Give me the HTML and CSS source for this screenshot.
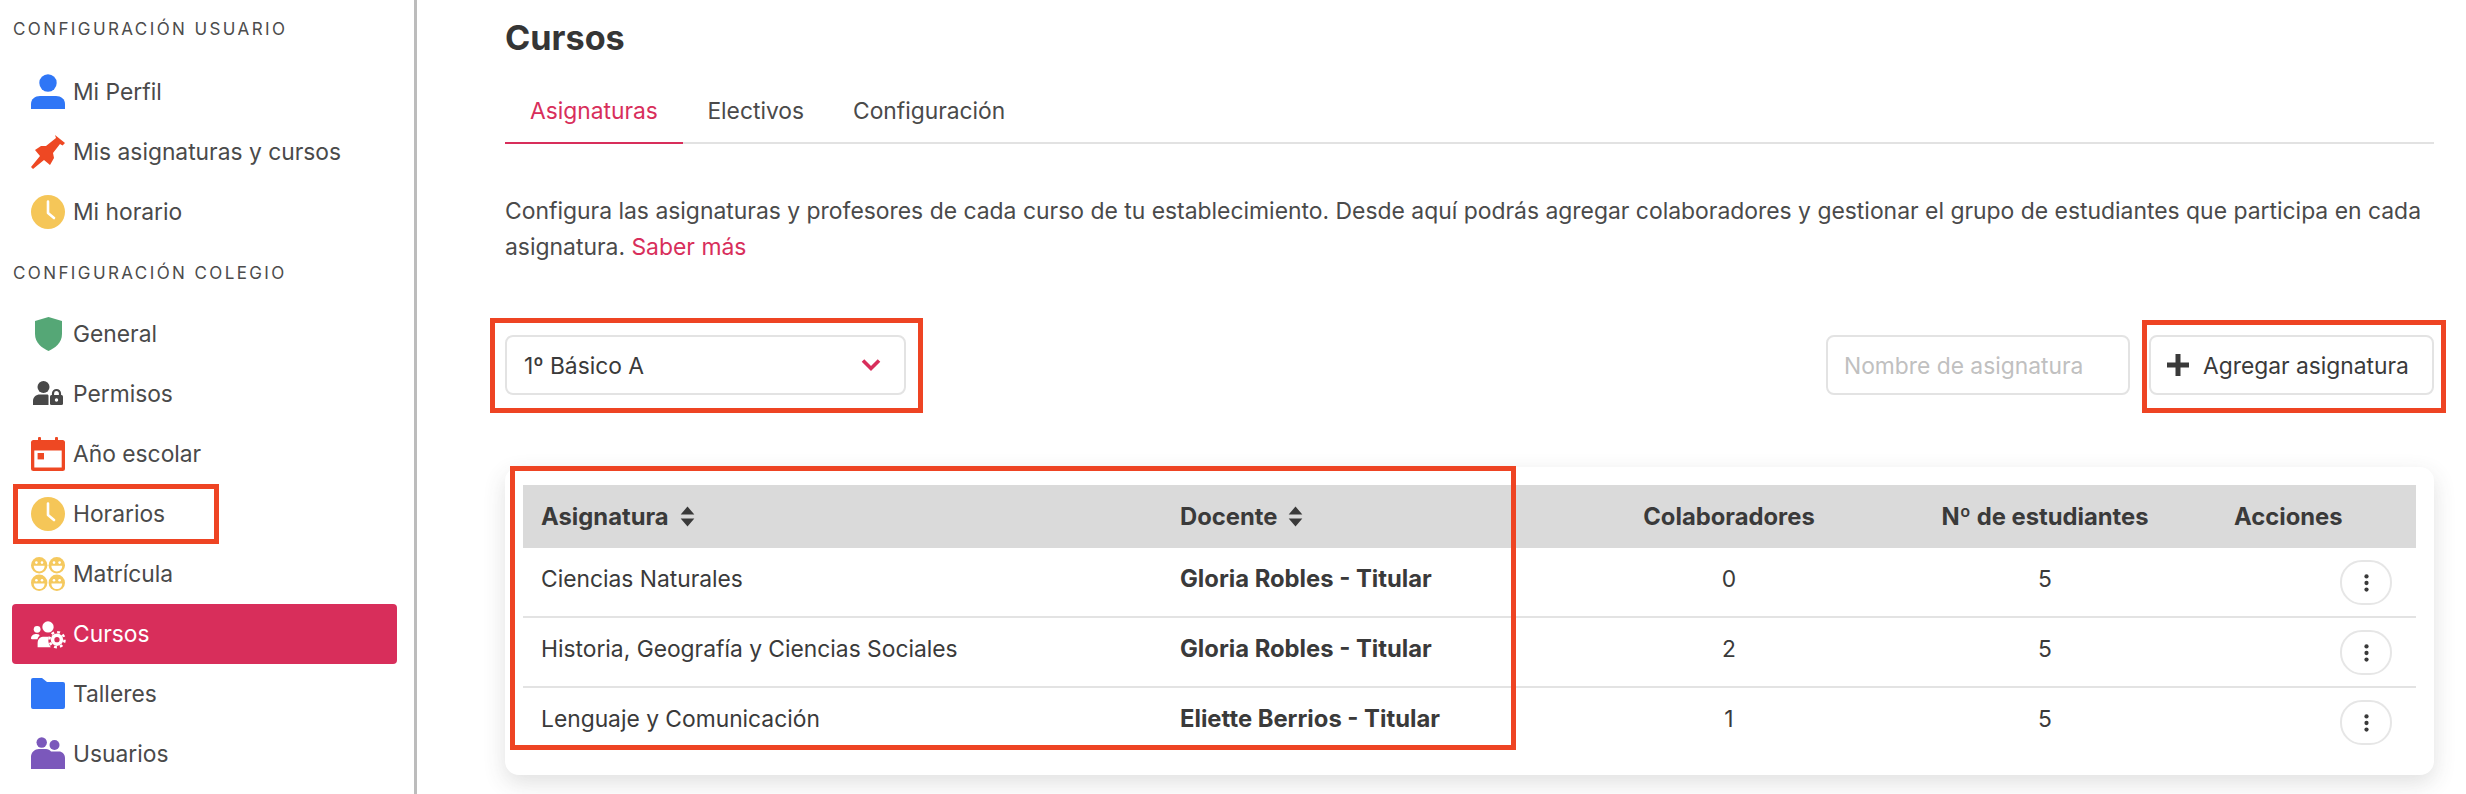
FILE: index.html
```html
<!DOCTYPE html>
<html lang="es">
<head>
<meta charset="utf-8">
<title>Cursos</title>
<link rel="stylesheet" href="styles.css">
</head>
<body>
<div class="app">
  <aside class="sidebar">
    <div class="nav-label nav-label-first">CONFIGURACIÓN USUARIO</div>
    <a class="nav-item"><svg class="nav-icon" viewBox="0 0 34 34"><circle cx="17" cy="8" r="8.7" fill="#2f76f6"/><path d="M0 34V29C0 24 4 21 9 21H25C30 21 34 24 34 29V34Z" fill="#2f76f6"/></svg><span>Mi Perfil</span></a>
    <a class="nav-item"><svg class="nav-icon" viewBox="0 0 34 34"><path d="M24 0L34 8L31.5 10.5L29 9L22 18L23 23L19 30L13 25L2 34L0 32L9 21L4 15L10 11L15 11L25 3Z" fill="#ee4823"/></svg><span>Mis asignaturas y cursos</span></a>
    <a class="nav-item"><svg class="nav-icon" viewBox="0 0 34 34"><circle cx="17" cy="17" r="17" fill="#f5c658"/><path d="M17 6.5V18L23 23" fill="none" stroke="#fff" stroke-width="2.6" stroke-linecap="round" stroke-linejoin="round"/></svg><span>Mi horario</span></a>
    <div class="nav-label">CONFIGURACIÓN COLEGIO</div>
    <a class="nav-item"><svg class="nav-icon" viewBox="0 0 34 34"><path d="M17.5 0L31 4V17C31 26 24 31 17.5 34C11 31 4 26 4 17V4Z" fill="#55a776"/></svg><span>General</span></a>
    <a class="nav-item"><svg class="nav-icon" viewBox="0 0 34 34"><circle cx="12.5" cy="10" r="6" fill="#484848"/><path d="M2 28V24C2 20 5 17.5 9 17.5H16C17 17.5 17.500 18 17.500 19V28Z" fill="#484848"/><path d="M22 18.500V16.500A3.500 3.500 0 0 1 29 16.500V18.500" fill="none" stroke="#484848" stroke-width="2.200"/><rect x="19" y="18" width="13" height="10" rx="1.500" fill="#484848"/><circle cx="25.500" cy="23" r="1.700" fill="#fff"/></svg><span>Permisos</span></a>
    <a class="nav-item"><svg class="nav-icon" viewBox="0 0 34 34"><rect y="3" width="34" height="31" rx="2.500" fill="#ee4823"/><rect x="7" width="3" height="6" rx="1" fill="#ee4823"/><rect x="24" width="3" height="6" rx="1" fill="#ee4823"/><rect x="3.300" y="13.500" width="27.400" height="17" fill="#fff"/><rect x="6.600" y="16" width="6.400" height="6.400" fill="#ee4823"/></svg><span>Año escolar</span></a>
    <a class="nav-item"><svg class="nav-icon" viewBox="0 0 34 34"><circle cx="17" cy="17" r="17" fill="#f5c658"/><path d="M17 6.500V18L23 23" fill="none" stroke="#fff" stroke-width="2.600" stroke-linecap="round" stroke-linejoin="round"/></svg><span>Horarios</span></a>
    <a class="nav-item"><svg class="nav-icon" viewBox="0 0 34 34"><defs><g id="smile"><circle cx="8.200" cy="8.200" r="8.200" fill="#f5c95e"/><circle cx="5.400" cy="5.600" r="1.300" fill="#fff"/><circle cx="11" cy="5.600" r="1.300" fill="#fff"/><path d="M2.800 8.800H13.600C13.600 12.200 11.400 14.400 8.200 14.400C5 14.400 2.800 12.200 2.800 8.800Z" fill="#fff"/></g></defs><use href="#smile"/><use href="#smile" x="17.600"/><use href="#smile" y="17.600"/><use href="#smile" x="17.600" y="17.600"/></svg><span>Matrícula</span></a>
    <a class="nav-item nav-item-active"><svg class="nav-icon nav-icon-wide" viewBox="-1 0 36 34"><circle cx="17" cy="9.500" r="6" fill="#fff"/><circle cx="5.500" cy="12" r="3.600" fill="#fff"/><path d="M-1 22C-1 18.500 2 17 5 17C7 17 8.500 18 8 19C6.500 20 6 21.500 6 22.500H0Z" fill="#fff"/><path d="M6 31V27C6 22 9 20 13 20H18C17 23 17 27 20 31Z" fill="#fff"/><circle cx="26.500" cy="23" r="6.600" fill="#fff"/><circle cx="26.500" cy="23" r="8" fill="none" stroke="#fff" stroke-width="2.600" stroke-dasharray="3 3.280"/><circle cx="26.500" cy="23" r="2.800" fill="#d82e5b"/></svg><span>Cursos</span></a>
    <a class="nav-item"><svg class="nav-icon" viewBox="0 0 34 34"><path d="M2 1H11L16 5H32A2 2 0 0 1 34 7V30A2 2 0 0 1 32 32H2A2 2 0 0 1 0 30V3A2 2 0 0 1 2 1Z" fill="#2f76f6"/></svg><span>Talleres</span></a>
    <a class="nav-item"><svg class="nav-icon" viewBox="0 0 34 34"><circle cx="10.700" cy="5.500" r="5.200" fill="#7b58bb"/><circle cx="23.500" cy="8" r="5" fill="#7b58bb"/><path d="M0 32V20C0 15 4 12 8 12H15C17 12 19 13 20 14.500H28C31 14.500 34 17 34 21V32Z" fill="#7b58bb"/></svg><span>Usuarios</span></a>
  </aside>

  <main class="content">
    <h1 class="title">Cursos</h1>
    <nav class="tabs">
      <a class="tab tab-active">Asignaturas</a>
      <a class="tab">Electivos</a>
      <a class="tab">Configuración</a>
    </nav>
    <p class="intro">Configura las asignaturas y profesores de cada curso de tu establecimiento. Desde aquí podrás agregar colaboradores y gestionar el grupo de estudiantes que participa en cada asignatura. <a class="link">Saber más</a></p>

    <div class="toolbar">
      <div class="select">
        <span>1º Básico A</span>
        <svg class="chevron" viewBox="0 0 20 14"><path d="M2 2.500L10 10.500L18 2.500" fill="none" stroke="#d82e5b" stroke-width="3.600"/></svg>
      </div>
      <div class="toolbar-right">
        <div class="input">Nombre de asignatura</div>
        <button class="add-button"><svg class="plus" viewBox="0 0 22 22"><path d="M11 0V22M0 11H22" stroke="#3a3a3a" stroke-width="5" fill="none"/></svg><span>Agregar asignatura</span></button>
      </div>
    </div>

    <section class="card">
      <div class="grid-row head-row">
        <div class="cell-sort">Asignatura <svg class="sort" viewBox="0 0 14 20"><path d="M7 0.500L13.500 8H0.500ZM7 19.500L13.500 12H0.500Z" fill="#3a3a3a"/></svg></div>
        <div class="cell-sort">Docente <svg class="sort" viewBox="0 0 14 20"><path d="M7 0.500L13.500 8H0.500ZM7 19.500L13.500 12H0.500Z" fill="#3a3a3a"/></svg></div>
        <div class="center">Colaboradores</div>
        <div class="center">Nº de estudiantes</div>
        <div class="head-actions">Acciones</div>
      </div>
      <div class="grid-row body-row">
        <div>Ciencias Naturales</div>
        <div class="strong">Gloria Robles - Titular</div>
        <div class="center">0</div>
        <div class="center">5</div>
        <div class="actions"><button class="more"><svg class="dots" viewBox="0 0 6 22"><circle cx="3" cy="3" r="2.600"/><circle cx="3" cy="11" r="2.600"/><circle cx="3" cy="19" r="2.600"/></svg></button></div>
      </div>
      <div class="grid-row body-row">
        <div>Historia, Geografía y Ciencias Sociales</div>
        <div class="strong">Gloria Robles - Titular</div>
        <div class="center">2</div>
        <div class="center">5</div>
        <div class="actions"><button class="more"><svg class="dots" viewBox="0 0 6 22"><circle cx="3" cy="3" r="2.600"/><circle cx="3" cy="11" r="2.600"/><circle cx="3" cy="19" r="2.600"/></svg></button></div>
      </div>
      <div class="grid-row body-row">
        <div>Lenguaje y Comunicación</div>
        <div class="strong">Eliette Berrios - Titular</div>
        <div class="center">1</div>
        <div class="center">5</div>
        <div class="actions"><button class="more"><svg class="dots" viewBox="0 0 6 22"><circle cx="3" cy="3" r="2.600"/><circle cx="3" cy="11" r="2.600"/><circle cx="3" cy="19" r="2.600"/></svg></button></div>
      </div>
    </section>
  </main>
</div>
<div class="mark mark-horarios"></div>
<div class="mark mark-select"></div>
<div class="mark mark-add"></div>
<div class="mark mark-table"></div>
</body>
</html>
```
FILE: styles.css
```css
* { box-sizing: border-box; }
html, body { margin: 0; height: 794px; overflow: hidden; background: #fff; }
body { font-family: Inter, "Liberation Sans", sans-serif; font-size: 22.8px; color: #4a4a4a; position: relative; }
.app { display: flex; height: 794px; }

.sidebar { width: 417px; flex: none; border-right: 3px solid #bcbcbc; padding: 0 17px 0 12px; }
.nav-label { font-size: 17px; line-height: 20px; letter-spacing: 2.4px; color: #4c4c4c; padding: 21px 0 21px 1px; }
.nav-label-first { padding: 19px 0 23px 1px; }
.nav-item { display: flex; align-items: center; height: 60px; padding-left: 19px; gap: 8px; border-radius: 4px; }
.nav-item span { margin-bottom: 2px; }
.nav-item-active { background: #d82e5b; color: #fff; }
.nav-icon { width: 34px; height: 34px; flex: none; overflow: visible; }

.content { flex: 1; min-width: 0; padding: 0 32px 0 88px; }
.title { margin: 18px 0 0; font-size: 34.2px; line-height: 40px; font-weight: 700; color: #353535; }
.tabs { display: flex; margin-top: 24px; border-bottom: 2px solid #e2e2e2; height: 62px; }
.tab { padding: 0 24.500px; height: 62px; line-height: 58px; }
.tab-active { color: #d82e5b; border-bottom: 2px solid #d82e5b; padding: 0 25px; }
.intro { margin: 49px 0 0; line-height: 36px; font-size: 22.9px; }
.link { color: #d82e5b; }

.toolbar { display: flex; justify-content: space-between; margin-top: 70px; }
.select { width: 401px; height: 60px; border: 2px solid #e3e3e3; border-radius: 8px; display: flex; align-items: center; justify-content: space-between; padding: 0 23px 0 17px; color: #3a3a3a; }
.chevron { width: 20px; height: 14px; }
.toolbar-right { display: flex; gap: 19px; }
.input { width: 304px; height: 60px; border: 2px solid #e3e3e3; border-radius: 8px; display: flex; align-items: center; padding-left: 16px; color: #c0c0c0; }
.add-button { width: 285px; height: 60px; background: #fff; border: 2px solid #e3e3e3; border-radius: 8px; display: flex; align-items: center; padding: 0 0 0 16px; gap: 14px; font: inherit; color: #3a3a3a; }
.plus { width: 22px; height: 22px; }

.card { margin-top: 72px; height: 308px; padding: 18px 18px 0; border-radius: 14px; background: #fff; box-shadow: 0 8px 22px rgba(60, 60, 60, .16); }
.grid-row { display: grid; grid-template-columns: 639px 400px 334px 298px 222px; }
.head-row { height: 63px; background: #dadada; align-items: center; font-weight: 700; font-size: 23.8px; color: #3a3a3a; }
.head-row > div:first-child, .head-row > div:nth-child(2) { padding-left: 18px; }
.cell-sort { display: flex; align-items: center; gap: 11px; }
.sort { width: 15px; height: 21px; }
.head-actions { padding-left: 40px; }
.center { text-align: center; }
.body-row { height: 70px; border-bottom: 2px solid #e3e3e3; color: #3a3a3a; padding-top: 18px; line-height: 26px; }
.body-row:last-child { border-bottom: 0; }
.body-row > div:first-child, .body-row > div:nth-child(2) { padding-left: 18px; }
.strong { font-weight: 700; font-size: 23.8px; }
.actions { display: flex; justify-content: flex-end; padding-right: 24px; margin-top: -6px; }
.more { width: 52px; height: 45px; background: #fff; border: 2px solid #e6e6e6; border-radius: 22px; padding: 0; display: flex; align-items: center; justify-content: center; }
.dots { width: 5px; height: 18px; fill: #3a3a3a; }

.mark { position: absolute; border: 5px solid #ee4423; pointer-events: none; }
.mark-horarios { left: 13px; top: 484px; width: 206px; height: 60px; }
.mark-select { left: 490px; top: 318px; width: 433px; height: 95px; }
.mark-add { left: 2142px; top: 320px; width: 304px; height: 93px; }
.mark-table { left: 510px; top: 466px; width: 1006px; height: 284px; }
```
